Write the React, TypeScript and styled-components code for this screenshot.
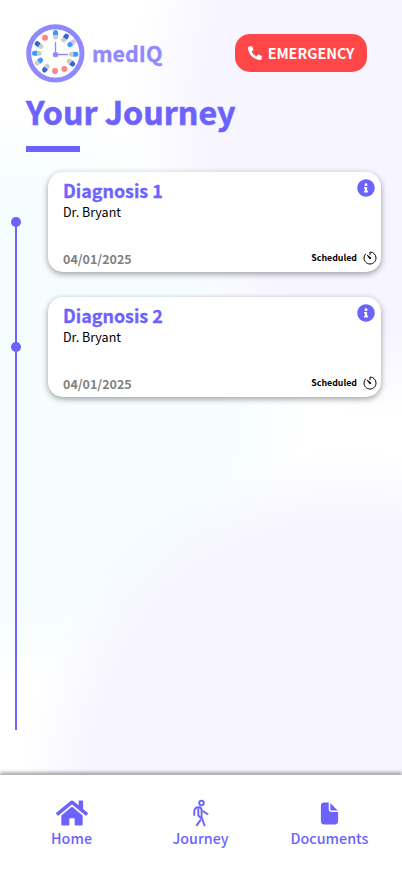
import React from 'react';
import styled, { createGlobalStyle } from 'styled-components';
import { FaHome, FaInfoCircle, FaPhoneAlt } from 'react-icons/fa';
import { IoDocument, IoTimerOutline } from 'react-icons/io5';

const violet = '#6c63ff';

const GlobalStyle = createGlobalStyle`
  *, *::before, *::after { box-sizing: border-box; }
  body {
    margin: 0;
    font-family: "Noto Sans CJK JP", "Noto Sans", sans-serif;
  }
  button { font: inherit; border: 0; padding: 0; background: none; }
`;

const Screen = styled.div`
  display: flex;
  flex-direction: column;
  width: 402px;
  height: 874px;
  overflow: hidden;
  background:
    radial-gradient(ellipse 270px 320px at 400px 100px, #f7f5ff 72%, rgba(247, 245, 255, 0) 100%),
    radial-gradient(ellipse 330px 350px at 350px 800px, #f7f5ff 80%, rgba(247, 245, 255, 0) 100%),
    radial-gradient(ellipse 290px 290px at 20px 400px, #f5fdff 68%, rgba(245, 253, 255, 0) 100%),
    #ffffff;
`;

const Header = styled.header`
  display: flex;
  align-items: center;
  justify-content: space-between;
  height: 58px;
  margin: 24px 35px 0 26px;
`;

const Brand = styled.div`
  display: flex;
  align-items: center;
  gap: 7px;
`;

const BrandName = styled.span`
  color: #9088ff;
  font-size: 21.4px;
  font-weight: 700;
  line-height: 36px;
  -webkit-text-stroke: 0.3px #9088ff;
`;

const EmergencyButton = styled.button`
  display: flex;
  align-items: center;
  justify-content: center;
  gap: 6px;
  width: 132px;
  height: 38px;
  border-radius: 15px;
  background: #ff4747;
  color: #fff;
  font-size: 14.3px;
  font-weight: 700;
  line-height: 22px;
`;

const Title = styled.h1`
  height: 52px;
  margin: 3px 0 0 26px;
  color: ${violet};
  font-size: 32.2px;
  font-weight: 700;
  line-height: 52px;
  -webkit-text-stroke: 0.6px ${violet};
`;

const TitleBar = styled.div`
  width: 54px;
  height: 6px;
  margin: 9px 0 20px 26px;
  background: ${violet};
`;

const Timeline = styled.main`
  display: flex;
  flex-direction: column;
  gap: 25px;
  height: 558px;
  padding: 0 21px 0 11px;
  background: linear-gradient(${violet}, ${violet}) 15px 50px / 2px 508px no-repeat;
`;

const Entry = styled.div`
  display: grid;
  grid-template-columns: 10px 333px;
  column-gap: 27px;
  align-items: center;
`;

const Dot = styled.span`
  width: 10px;
  height: 10px;
  border-radius: 50%;
  background: ${violet};
`;

const Card = styled.article`
  display: flex;
  flex-direction: column;
  justify-content: space-between;
  height: 100px;
  padding: 6px 3px 3px 15px;
  border-radius: 15px;
  background: #fff;
  box-shadow: 0 2px 6px rgba(0, 0, 0, 0.38);
`;

const CardRow = styled.div`
  display: flex;
  justify-content: space-between;
  align-items: flex-start;
`;

const CardTitle = styled.h2`
  margin: 0;
  color: ${violet};
  font-size: 17.9px;
  font-weight: 700;
  line-height: 24px;
  -webkit-text-stroke: 0.3px ${violet};
`;

const Doctor = styled.p`
  margin: 1px 0 0;
  color: #000;
  font-size: 12.5px;
  line-height: 18px;
`;

const InfoButton = styled.button`
  display: flex;
  margin: 1px 3px 0 0;
  color: ${violet};
`;

const DateText = styled.time`
  color: #808080;
  font-size: 12.5px;
  font-weight: 700;
  line-height: 20px;
`;

const Status = styled.div`
  display: flex;
  align-items: center;
  gap: 5px;
  height: 17px;
  color: #000;
  font-size: 8.8px;
  font-weight: 700;
`;

const BottomNav = styled.nav`
  display: grid;
  grid-template-columns: 143px 115px 143px;
  height: 99px;
  margin-top: auto;
  padding-top: 24px;
  background: #fff;
  box-shadow: 0 -3px 3px rgba(0, 0, 0, 0.3);
`;

const NavItem = styled.a`
  display: flex;
  flex-direction: column;
  align-items: center;
  color: ${violet};
  font-size: 14.3px;
  font-weight: 500;
  line-height: 22px;
`;

const NavIcon = styled.span`
  display: flex;
  align-items: center;
  height: 28px;
`;

const blue = '#3d99ff';
const navy = '#3568d0';

// x, y, rotation (degrees clockwise from coloured end up), colour
const pills: [number, number, number, string][] = [
  [100.5, 44, 0, blue],
  [129.5, 54, 34, navy],
  [148.5, 70, 232, blue],
  [155, 103, 90, blue],
  [147, 128, 128, navy],
  [71.5, 145, 218, navy],
  [51, 124.5, 50, blue],
  [44, 100, 270, blue],
  [51, 75, 306, navy],
];

const tablets = [
  [127, 147],
  [99, 153],
  [69, 53],
];

function PillClock() {
  return (
    <svg width="59" height="59" viewBox="12 12 177 177" fill="none">
      <circle cx="100" cy="100" r="80" fill="#fff" stroke="#9088ff" strokeWidth="15" />
      {pills.map(([x, y, angle, color]) => (
        <g key={`${x}-${y}`} transform={`translate(${x} ${y}) rotate(${angle})`}>
          <path d="M-7.5 1V7a7.5 7.5 0 0 0 15 0V1Z" fill="#cccccf" />
          <path d="M-7.5 1V-6.5a7.5 7.5 0 0 1 15 0V1Z" fill={color} />
        </g>
      ))}
      {tablets.map(([x, y]) => (
        <circle key={x} cx={x} cy={y} r="9" fill="#ff8586" />
      ))}
      <path d="M100.5 66V103.5H138" stroke="#9088ff" strokeWidth="4" />
      <circle cx="100.5" cy="104" r="8" fill="#9088ff" />
    </svg>
  );
}

function Walker() {
  return (
    <svg width="16" height="28" viewBox="0 0 16 28" fill="none" stroke="currentColor" strokeWidth="1.9" strokeLinecap="butt" strokeLinejoin="round">
      <circle cx="8.5" cy="4.1" r="2.3" />
      <path d="M1.2 16.8V12.5C1.4 10.1 3.2 8.2 5.8 8.2C7.7 8.2 8.6 9.3 8.6 11.3V18.3L11.8 27.1" />
      <path d="M5.3 9.3V16.5L8.7 19.7" />
      <path d="M7.8 20.6L3.4 26.9" />
      <path d="M9.3 11.7L15.2 15.5" />
    </svg>
  );
}

const entries = [
  { title: 'Diagnosis 1', doctor: 'Dr. Bryant', date: '04/01/2025', status: 'Scheduled' },
  { title: 'Diagnosis 2', doctor: 'Dr. Bryant', date: '04/01/2025', status: 'Scheduled' },
];

export default function App() {
  return (
    <>
      <GlobalStyle />
      <Screen>
        <Header>
          <Brand>
            <PillClock />
            <BrandName>medIQ</BrandName>
          </Brand>
          <EmergencyButton>
            <FaPhoneAlt size={14} />
            EMERGENCY
          </EmergencyButton>
        </Header>
        <Title>Your Journey</Title>
        <TitleBar />
        <Timeline>
          {entries.map((entry) => (
            <Entry key={entry.title}>
              <Dot />
              <Card>
                <CardRow>
                  <div>
                    <CardTitle>{entry.title}</CardTitle>
                    <Doctor>{entry.doctor}</Doctor>
                  </div>
                  <InfoButton aria-label="Details">
                    <FaInfoCircle size={18} />
                  </InfoButton>
                </CardRow>
                <CardRow>
                  <DateText>{entry.date}</DateText>
                  <Status>
                    {entry.status}
                    <IoTimerOutline size={16} />
                  </Status>
                </CardRow>
              </Card>
            </Entry>
          ))}
        </Timeline>
        <BottomNav>
          <NavItem>
            <NavIcon>
              <FaHome size={32} />
            </NavIcon>
            Home
          </NavItem>
          <NavItem>
            <NavIcon>
              <Walker />
            </NavIcon>
            Journey
          </NavItem>
          <NavItem>
            <NavIcon>
              <IoDocument size={25} />
            </NavIcon>
            Documents
          </NavItem>
        </BottomNav>
      </Screen>
    </>
  );
}
